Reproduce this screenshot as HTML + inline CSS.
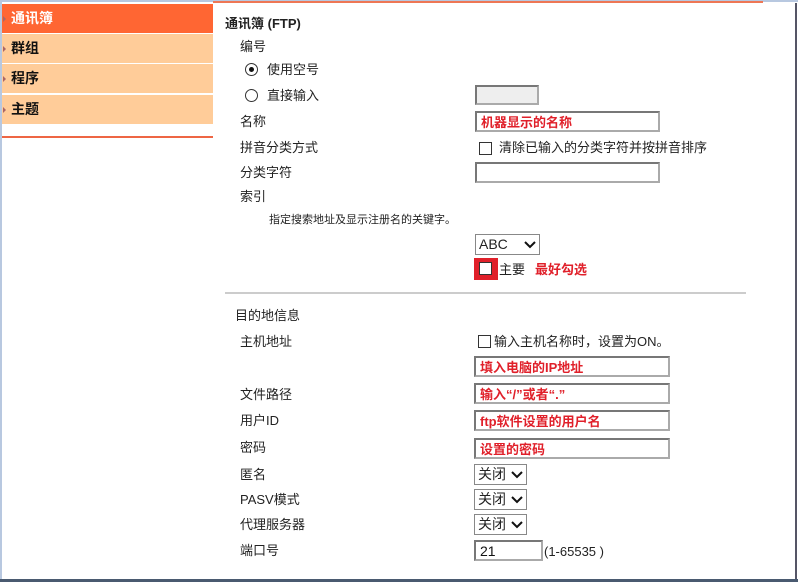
<!DOCTYPE html>
<html><head><meta charset="utf-8"><style>
*{margin:0;padding:0;box-sizing:border-box}
body{width:798px;height:582px;background:#fff;position:relative;overflow:hidden;font-family:"Liberation Sans","Noto Sans CJK SC",sans-serif;font-size:13px;color:#222}
.a{position:absolute;white-space:nowrap;line-height:16px}
.side{position:absolute;left:2px;width:211px;height:29px;background:#ffcc99;font-weight:bold;font-size:14px;line-height:29px;padding-left:9px;color:#111}
.side:before{content:"";position:absolute;left:1px;top:12px;border-left:3px solid #a66;border-top:3px solid transparent;border-bottom:3px solid transparent}
.in{position:absolute;border:2px solid #777;border-right-color:#aaa;border-bottom-color:#aaa;background:#fff;height:21px;color:#e0202a;font-weight:bold;font-size:13px;line-height:19px;padding-left:4px}
.sel{position:absolute;border:1px solid #888;background:#fff;height:21px;font-size:14px;line-height:19px;padding-left:3px}
.sel svg{position:absolute;right:3px;top:6px}
.cb{position:absolute;width:13px;height:13px;border:1px solid #333;background:#fff}
.rd{position:absolute;width:13px;height:13px;border:1px solid #333;border-radius:50%;background:#fff}
.red{color:#e0202a;font-weight:bold}
</style></head><body>
<div style="position:absolute;left:0;top:0;width:798px;height:2px;background:#b8c8e0"></div>
<div style="position:absolute;left:213px;top:1px;width:550px;height:2px;background:#ee7755"></div>
<div style="position:absolute;left:0;top:0;width:2px;height:582px;background:#b8c8e0"></div>
<div style="position:absolute;left:795px;top:3px;width:2px;height:577px;background:#556"></div>
<div style="position:absolute;left:0;top:579px;width:798px;height:3px;background:#4a5a70"></div>

<div class="side" style="top:4px;background:#ff6633;color:#fff">通讯簿</div>
<div class="side" style="top:34px">群组</div>
<div class="side" style="top:64px">程序</div>
<div class="side" style="top:95px">主题</div>
<div style="position:absolute;left:2px;top:136px;width:211px;height:2px;background:#ee6644"></div>

<div class="a" style="left:225px;top:16px;font-weight:bold">通讯簿 (FTP)</div>
<div class="a" style="left:240px;top:39px">编号</div>
<div class="rd" style="left:245px;top:63px"><div style="position:absolute;left:3px;top:3px;width:5px;height:5px;border-radius:50%;background:#111"></div></div>
<div class="a" style="left:267px;top:62px">使用空号</div>
<div class="rd" style="left:245px;top:89px"></div>
<div class="a" style="left:267px;top:88px">直接输入</div>
<div class="in" style="left:475px;top:85px;width:64px;height:20px;background:#eee"></div>
<div class="a" style="left:240px;top:114px">名称</div>
<div class="in" style="left:475px;top:111px;width:185px">机器显示的名称</div>
<div class="a" style="left:240px;top:140px">拼音分类方式</div>
<div class="cb" style="left:479px;top:142px"></div>
<div class="a" style="left:499px;top:140px">清除已输入的分类字符并按拼音排序</div>
<div class="a" style="left:240px;top:165px">分类字符</div>
<div class="in" style="left:475px;top:162px;width:185px"></div>
<div class="a" style="left:240px;top:189px">索引</div>
<div class="a" style="left:269px;top:212px;font-size:11px">指定搜索地址及显示注册名的关键字。</div>
<div class="sel" style="left:475px;top:234px;width:65px">ABC<svg width="12" height="8"><path d="M1 1L6 6L11 1" stroke="#111" stroke-width="2" fill="none"/></svg></div>
<div style="position:absolute;left:474px;top:258px;width:24px;height:22px;background:#e0202a"></div>
<div class="cb" style="left:479px;top:262px"></div>
<div class="a" style="left:499px;top:262px">主要</div>
<div class="a red" style="left:535px;top:262px">最好勾选</div>

<div style="position:absolute;left:225px;top:292px;width:521px;height:2px;background:#ccc"></div>
<div class="a" style="left:235px;top:308px">目的地信息</div>
<div class="a" style="left:240px;top:334px">主机地址</div>
<div class="cb" style="left:478px;top:335px"></div>
<div class="a" style="left:494px;top:334px">输入主机名称时，设置为ON。</div>
<div class="in" style="left:474px;top:356px;width:196px">填入电脑的IP地址</div>
<div class="a" style="left:240px;top:387px">文件路径</div>
<div class="in" style="left:474px;top:383px;width:196px">输入“/”或者“.”</div>
<div class="a" style="left:240px;top:413px">用户ID</div>
<div class="in" style="left:474px;top:410px;width:196px">ftp软件设置的用户名</div>
<div class="a" style="left:240px;top:440px">密码</div>
<div class="in" style="left:474px;top:438px;width:196px">设置的密码</div>
<div class="a" style="left:240px;top:467px">匿名</div>
<div class="sel" style="left:474px;top:464px;width:53px">关闭<svg width="12" height="8"><path d="M1 1L6 6L11 1" stroke="#111" stroke-width="2" fill="none"/></svg></div>
<div class="a" style="left:240px;top:492px">PASV模式</div>
<div class="sel" style="left:474px;top:489px;width:53px">关闭<svg width="12" height="8"><path d="M1 1L6 6L11 1" stroke="#111" stroke-width="2" fill="none"/></svg></div>
<div class="a" style="left:240px;top:517px">代理服务器</div>
<div class="sel" style="left:474px;top:514px;width:53px">关闭<svg width="12" height="8"><path d="M1 1L6 6L11 1" stroke="#111" stroke-width="2" fill="none"/></svg></div>
<div class="a" style="left:240px;top:543px">端口号</div>
<div class="in" style="left:474px;top:540px;width:69px;color:#111;font-weight:normal;font-size:14px">21</div>
<div class="a" style="left:544px;top:544px">(1-65535 )</div>
</body></html>
